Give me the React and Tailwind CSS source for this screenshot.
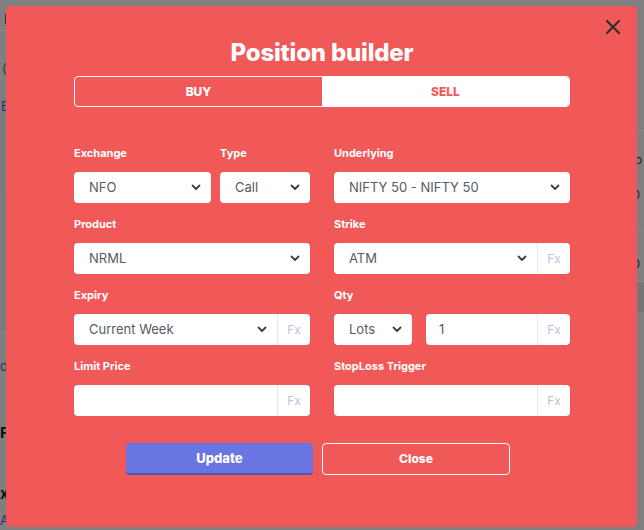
import React from 'react';

const font = { fontFamily: 'Inter, "Open Sans", sans-serif' };

const Chevron = () => (
  <svg width="10" height="7" viewBox="0 0 10 7" className="shrink-0">
    <path d="M1.5 1.5 L5 5 L8.5 1.5" fill="none" stroke="#3b3f45" strokeWidth="1.8" strokeLinecap="round" strokeLinejoin="round" />
  </svg>
);

const Select = ({ value, className = '' }) => (
  <div className={`h-[31px] bg-white rounded-[4px] flex items-center justify-between pl-[15px] pr-[10px] text-[13px] text-[#555b64] ${className}`}>
    <span className="truncate">{value}</span>
    <Chevron />
  </div>
);

const Fx = () => (
  <div className="w-[33px] h-full border-l border-[#e6e8ee] flex items-center justify-center text-[12px] text-[#b8c2dc]">
    Fx
  </div>
);

const FxSelect = ({ value }) => (
  <div className="h-[31px] bg-white rounded-[4px] flex items-center text-[13px] text-[#555b64]">
    <div className="flex-1 flex items-center justify-between pl-[15px] pr-[10px]">
      <span>{value}</span>
      <Chevron />
    </div>
    <Fx />
  </div>
);

const FxInput = ({ value = '', className = '' }) => (
  <div className={`h-[31px] bg-white rounded-[4px] flex items-center text-[13px] text-[#555b64] ${className}`}>
    <div className="flex-1 pl-[13px]">{value}</div>
    <Fx />
  </div>
);

const Label = ({ children }) => (
  <div className="h-[16px] leading-[16px] mb-[11px] text-[11px] font-bold text-white">{children}</div>
);

export default function App() {
  return (
    <div className="relative w-[644px] h-[530px] overflow-hidden bg-[#7f7f7f]" style={font}>
      {/* dimmed page behind the modal */}
      <div className="flex justify-between h-full">
        <div className="w-[20px] flex flex-col text-[13px] text-[#1c1c1c]">
          <div className="h-[36px] pl-[4px] pt-[10px] leading-[18px]">I</div>
          <div className="h-px bg-[#8a8a8a]" />
          <div className="h-[76px] pl-[2px] pt-[28px] text-[#3a3a3a]">(</div>
          <div className="h-[117px] bg-[#7a7a7a] pl-[1px] pt-[0px] text-[#2c2f6a]">Ed</div>
          <div className="h-[183px] bg-[#7c7c7c]" />
          <div className="h-px bg-[#8a8a8a]" />
          <div className="h-[56px] pt-[24px] text-[#2c2f6a]">d</div>
          <div className="h-[80px] pt-[40px] font-bold text-[15px] text-[#111]">Fr</div>
          <div className="h-[60px] pt-[30px] font-bold text-[15px] text-[#111]">xi</div>
          <div className="pt-[4px] text-[#2c2f6a]">Ad</div>
        </div>
        <div className="w-[20px] flex flex-col items-end text-[12px] text-[#1c1c1c]">
          <div className="h-[130px]" />
          <div className="h-px w-full bg-[#8a8a8a]" />
          <div className="h-[45px] pt-[20px] pr-[2px]">xp</div>
          <div className="h-[54px] pt-[10px] pr-[4px] leading-[18px]">0</div>
          <div className="h-px w-full bg-[#8a8a8a]" />
          <div className="h-[50px] pt-[24px] pr-[4px] leading-[18px]">0</div>
          <div className="h-px w-full bg-[#8a8a8a]" />
          <div className="h-[30px] w-full bg-[#767676]" />
        </div>
      </div>

      {/* modal */}
      <div className="absolute left-[6px] top-[6px] w-[631px] h-[521px] bg-[#f15959] rounded-[5px]">
        <button className="absolute right-[16px] top-[13px] w-[16px] h-[16px] flex items-center justify-center">
          <svg width="16" height="16" viewBox="0 0 16 16">
            <path d="M2 2 L14 14 M14 2 L2 14" stroke="#2f2f2f" strokeWidth="2.2" strokeLinecap="round" />
          </svg>
        </button>

        <div className="pl-[68px] pr-[67px] pt-[32px]">
          <h1 className="text-center text-[24px] leading-[30px] font-extrabold text-white tracking-[-0.2px]">Position builder</h1>

          <div className="mt-[8px] flex h-[31px] rounded-[4px] border border-white overflow-hidden text-[12px] font-extrabold">
            <div className="flex-1 flex items-center justify-center text-white">BUY</div>
            <div className="flex-1 flex items-center justify-center bg-white text-[#f15959]">SELL</div>
          </div>

          <div className="mt-[38px] grid grid-cols-2 gap-x-[24px] gap-y-[13px]">
            <div className="flex gap-[9px]">
              <div className="w-[137px]">
                <Label>Exchange</Label>
                <Select value="NFO" />
              </div>
              <div className="flex-1">
                <Label>Type</Label>
                <Select value="Call" />
              </div>
            </div>
            <div>
              <Label>Underlying</Label>
              <Select value="NIFTY 50 - NIFTY 50" />
            </div>

            <div>
              <Label>Product</Label>
              <Select value="NRML" />
            </div>
            <div>
              <Label>Strike</Label>
              <FxSelect value="ATM" />
            </div>

            <div>
              <Label>Expiry</Label>
              <FxSelect value="Current Week" />
            </div>
            <div>
              <Label>Qty</Label>
              <div className="flex gap-[14px]">
                <Select value="Lots" className="w-[78px]" />
                <FxInput value="1" className="flex-1" />
              </div>
            </div>

            <div>
              <Label>Limit Price</Label>
              <FxInput />
            </div>
            <div>
              <Label>StopLoss Trigger</Label>
              <FxInput />
            </div>
          </div>

          <div className="mt-[27px] ml-[52px] flex gap-[9px]">
            <button className="w-[187px] h-[32px] pt-[2px] rounded-[4px] bg-[#6875e3] border-b-2 border-[#4b55b5] text-white text-[13px] font-extrabold">
              Update
            </button>
            <button className="w-[188px] h-[32px] rounded-[4px] border border-white text-white text-[12px] font-extrabold">
              Close
            </button>
          </div>
        </div>
      </div>
    </div>
  );
}
